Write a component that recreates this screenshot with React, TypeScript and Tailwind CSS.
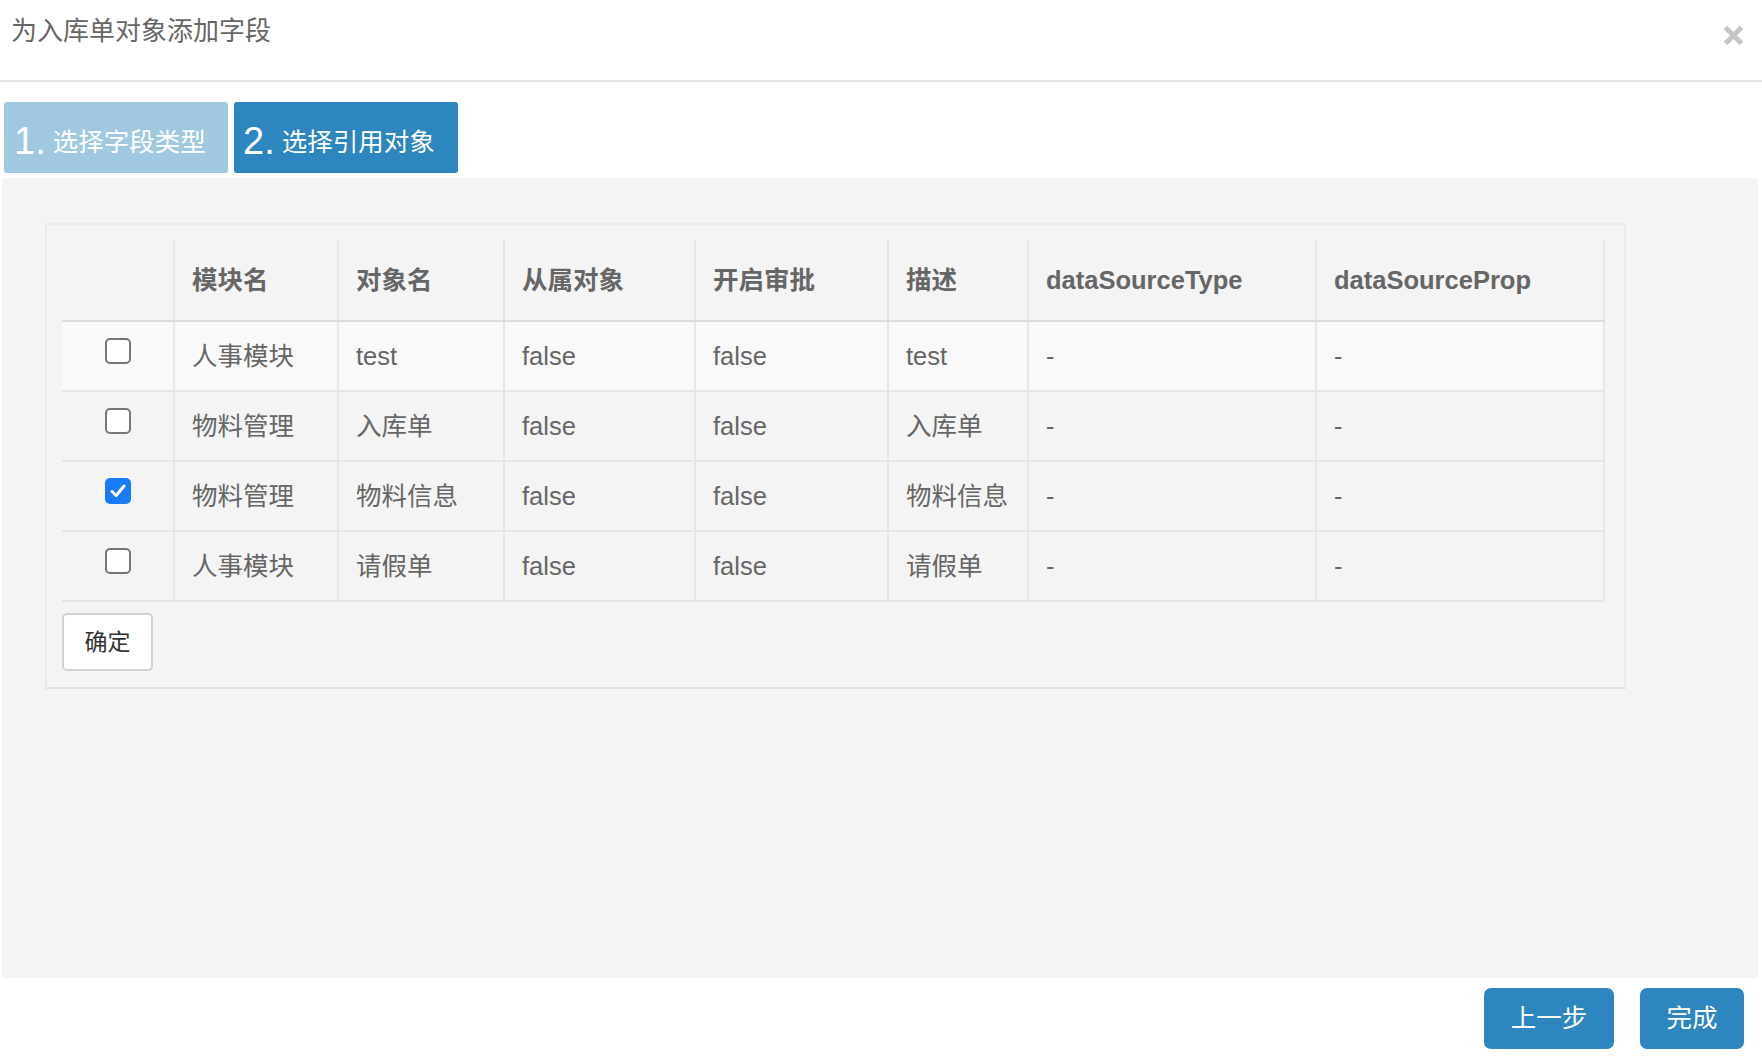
import React from "react";

const FONT = '"Liberation Sans", "Noto Sans CJK SC", Arial, sans-serif';

const widths = [113, 164, 166, 191, 193, 140, 288, 288];
const headers = ["", "模块名", "对象名", "从属对象", "开启审批", "描述", "dataSourceType", "dataSourceProp"];
const rows = [
  { checked: false, cells: ["人事模块", "test", "false", "false", "test", "-", "-"], light: true },
  { checked: false, cells: ["物料管理", "入库单", "false", "false", "入库单", "-", "-"], light: false },
  { checked: true, cells: ["物料管理", "物料信息", "false", "false", "物料信息", "-", "-"], light: false },
  { checked: false, cells: ["人事模块", "请假单", "false", "false", "请假单", "-", "-"], light: false },
];

function Checkbox({ checked }: { checked: boolean }) {
  if (checked) {
    return (
      <div className="w-[26px] h-[26px] rounded-[5px] bg-[#1a7cf5] flex items-center justify-center mb-[10px]">
        <svg width="18" height="18" viewBox="0 0 18 18">
          <path d="M3 9.5 L7.2 13.5 L15 4" fill="none" stroke="#ffffff" strokeWidth="3" strokeLinecap="round" strokeLinejoin="round" />
        </svg>
      </div>
    );
  }
  return <div className="w-[26px] h-[26px] rounded-[5px] border-2 border-[#767676] bg-white mb-[10px]" />;
}

export default function App() {
  return (
    <div className="w-[1762px] h-[1062px] bg-white text-[#666]" style={{ fontFamily: FONT }}>
      {/* header */}
      <div className="h-[82px] border-b-2 border-[#e5e5e5] flex justify-between">
        <div className="pl-[11px] pt-[18px] text-[26px] leading-[26px] text-[#666]">为入库单对象添加字段</div>
        <div className="pr-[18px] pt-[25px]">
          <svg width="21" height="21" viewBox="0 0 21 21">
            <path d="M2.5 2.5 L18.5 18.5 M18.5 2.5 L2.5 18.5" stroke="#c6c6c6" strokeWidth="5" strokeLinecap="butt" />
          </svg>
        </div>
      </div>

      {/* steps */}
      <div className="flex gap-[6px] pl-[4px] mt-[20px]">
        <div className="w-[224px] h-[71px] rounded-[3px] bg-[#a0c8e1] text-white flex items-center pl-[10px] pt-[6px]">
          <span className="text-[38px] leading-none">1.</span>
          <span className="text-[25.5px] leading-none ml-[7px] mt-[4px]">选择字段类型</span>
        </div>
        <div className="w-[224px] h-[71px] rounded-[3px] bg-[#2d86bd] text-white flex items-center pl-[9px] pt-[6px]">
          <span className="text-[38px] leading-none">2.</span>
          <span className="text-[25.5px] leading-none ml-[7px] mt-[4px]">选择引用对象</span>
        </div>
      </div>

      {/* panel */}
      <div className="mt-[5px] ml-[2px] mr-[4px] h-[800px] bg-[#f4f4f4] pt-[45px] pl-[43px]">
        <div className="w-[1581px] border-2 border-[#ebebeb] border-b-[#e0e0e0] pl-[15px] pt-[15px] pr-[19px] pb-[16px]">
          <div className="w-[1543px]">
            {/* header row */}
            <div className="flex h-[82px] border-b-2 border-[#dddddd]">
              {headers.map((h, i) => (
                <div
                  key={i}
                  style={{ width: widths[i] }}
                  className="border-r-2 border-[#e6e6e6] flex items-center pl-[17px] text-[25.5px] font-bold text-[#666] whitespace-nowrap"
                >
                  {h}
                </div>
              ))}
            </div>
            {rows.map((r, ri) => (
              <div
                key={ri}
                className={
                  "flex h-[70px] border-b-2 border-[#e6e6e6] " + (r.light ? "bg-[#f9f9f9]" : "bg-[#f4f4f4]")
                }
              >
                <div style={{ width: widths[0] }} className="border-r-2 border-[#e6e6e6] flex items-center justify-center">
                  <Checkbox checked={r.checked} />
                </div>
                {r.cells.map((c, ci) => (
                  <div
                    key={ci}
                    style={{ width: widths[ci + 1] }}
                    className="border-r-2 border-[#e6e6e6] flex items-center pl-[17px] text-[25.5px] text-[#666] whitespace-nowrap"
                  >
                    {c}
                  </div>
                ))}
              </div>
            ))}
          </div>
          <button className="mt-[11px] w-[91px] h-[58px] bg-white border-2 border-[#d2d2d2] rounded-[5px] text-[23px] text-[#333] flex items-center justify-center">
            确定
          </button>
        </div>
      </div>

      {/* footer */}
      <div className="flex justify-end gap-[26px] pr-[18px] pt-[10px]">
        <button className="w-[130px] h-[61px] rounded-[7px] bg-[#2d86bd] text-white text-[25.5px] flex items-center justify-center">
          上一步
        </button>
        <button className="w-[104px] h-[61px] rounded-[7px] bg-[#2d86bd] text-white text-[25.5px] flex items-center justify-center">
          完成
        </button>
      </div>
    </div>
  );
}
